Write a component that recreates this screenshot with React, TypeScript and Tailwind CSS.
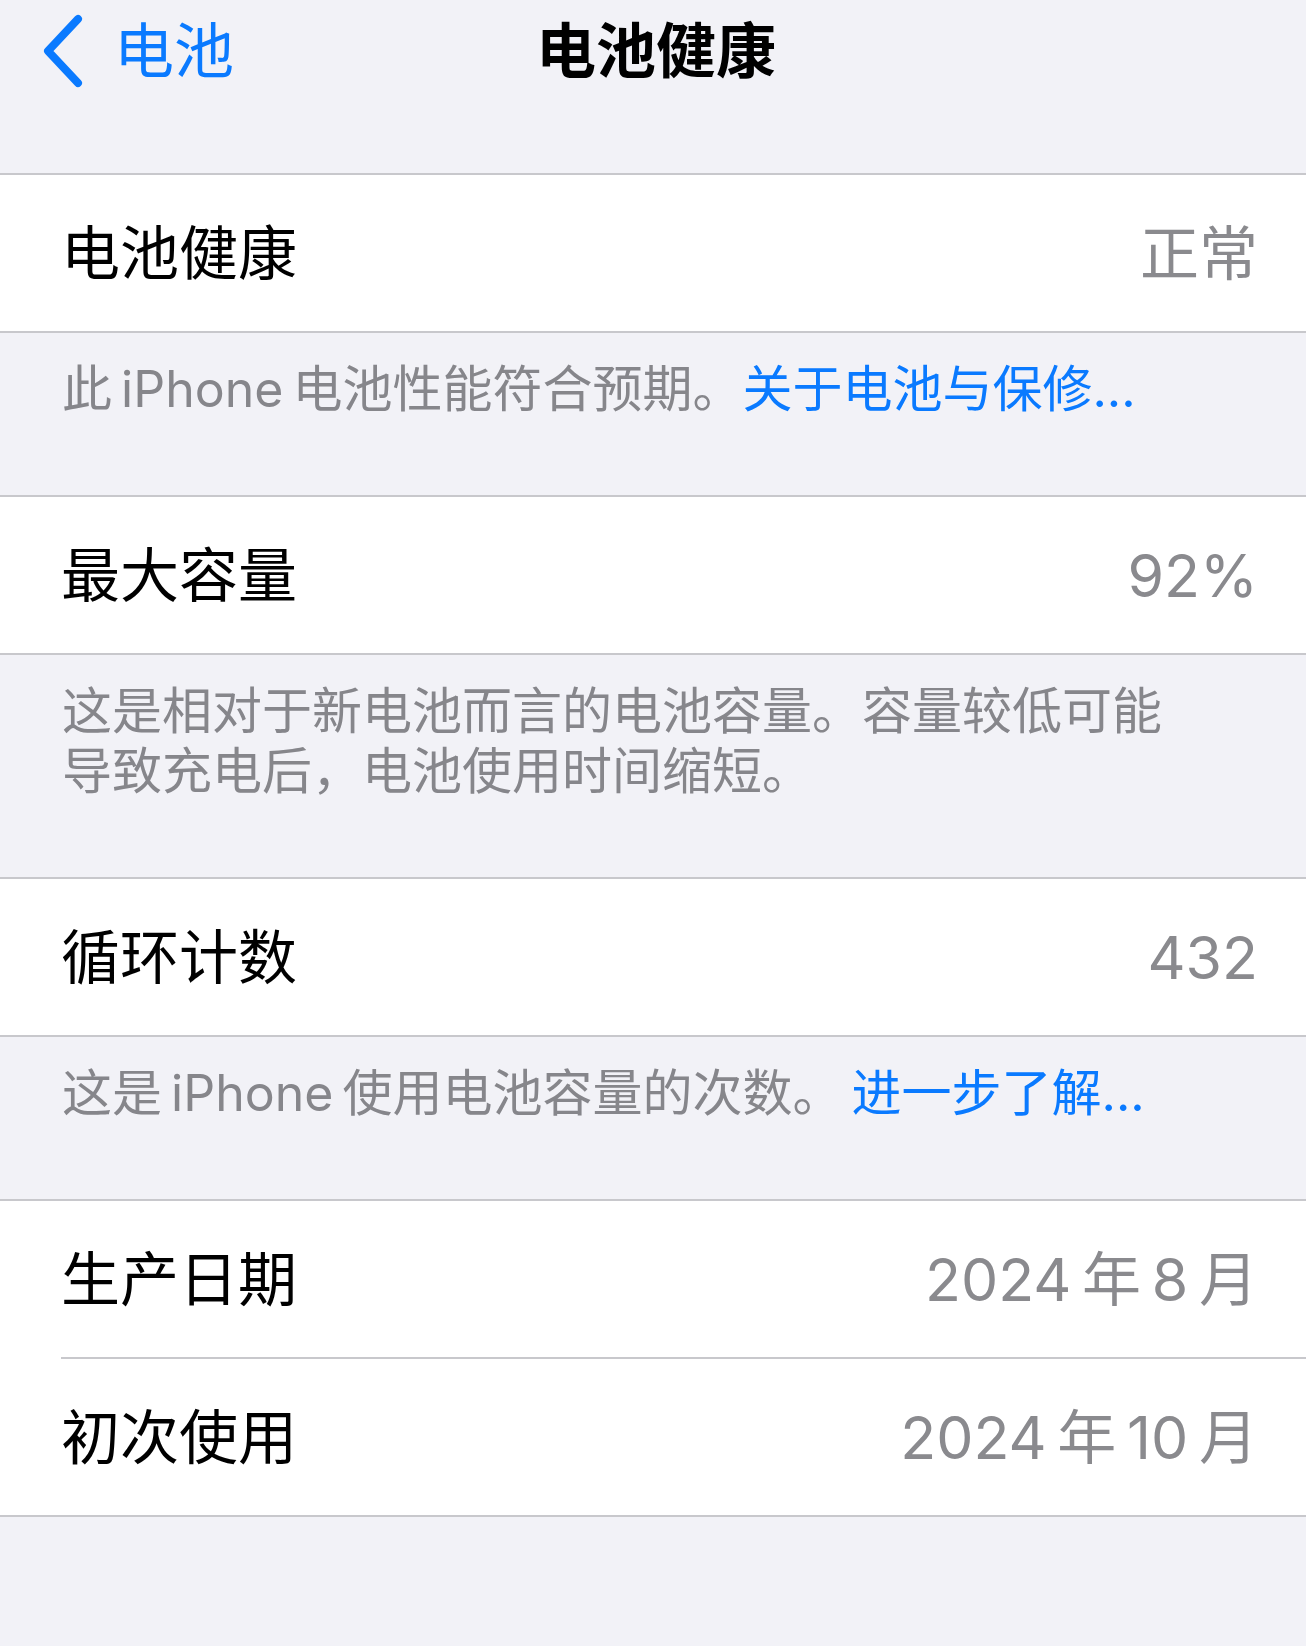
import React from 'react';

const font = { fontFamily: 'Inter, "Noto Sans CJK SC", sans-serif' };

function Row({ label, value }: { label: string; value: string }) {
  return (
    <div className="flex h-[156px] items-center justify-between pl-[61px] pr-[48px]">
      <span className="text-[59px] leading-none text-black">{label}</span>
      <span className="text-[59px] leading-none text-[#8a8a8e]">{value}</span>
    </div>
  );
}

function Footer({ children }: { children: React.ReactNode }) {
  return (
    <div className="pl-[62px] pr-[30px] pt-[26px] pb-[76px] text-[50px] leading-[60px] text-[#86868b]">
      {children}
    </div>
  );
}

export default function App() {
  return (
    <div className="min-h-[1646px] w-full bg-[#f2f2f7]" style={font}>
      {/* Nav bar */}
      <div className="h-[175px] border-b-2 border-[#c8c8cc]">
        <div className="grid h-[102px] grid-cols-[1fr_auto_1fr] items-center">
          <div className="flex items-center pl-[40px]">
            <svg width="46" height="76" viewBox="0 0 46 76" fill="none">
              <polyline
                points="38,6 8,38 38,70"
                stroke="#0a7aff"
                strokeWidth="8"
                strokeLinecap="round"
                strokeLinejoin="round"
              />
            </svg>
            <span className="ml-[28px] text-[60px] leading-none text-[#0a7aff]">电池</span>
          </div>
          <h1 className="ml-[6px] text-[60px] font-bold leading-none text-black">电池健康</h1>
          <div />
        </div>
      </div>

      <div className="bg-white border-b-2 border-[#c8c8cc]">
        <Row label="电池健康" value="正常" />
      </div>
      <Footer>
        此{'\u2009'}iPhone{'\u2009'}电池性能符合预期。<span className="text-[#0a7aff]">关于电池与保修...</span>
      </Footer>

      <div className="bg-white border-y-2 border-[#c8c8cc]">
        <Row label="最大容量" value="92%" />
      </div>
      <Footer>
        这是相对于新电池而言的电池容量。容量较低可能
        <br />
        导致充电后，电池使用时间缩短。
      </Footer>

      <div className="bg-white border-y-2 border-[#c8c8cc]">
        <Row label="循环计数" value="432" />
      </div>
      <Footer>
        这是{'\u2009'}iPhone{'\u2009'}使用电池容量的次数。{'\u2009'}<span className="text-[#0a7aff]">进一步了解...</span>
      </Footer>

      <div className="bg-white border-y-2 border-[#c8c8cc]">
        <Row label="生产日期" value={'2024\u2009年\u20098\u2009月'} />
        <div className="ml-[61px] h-[2px] bg-[#c8c8cc]" />
        <Row label="初次使用" value={'2024\u2009年\u200910\u2009月'} />
      </div>
    </div>
  );
}
